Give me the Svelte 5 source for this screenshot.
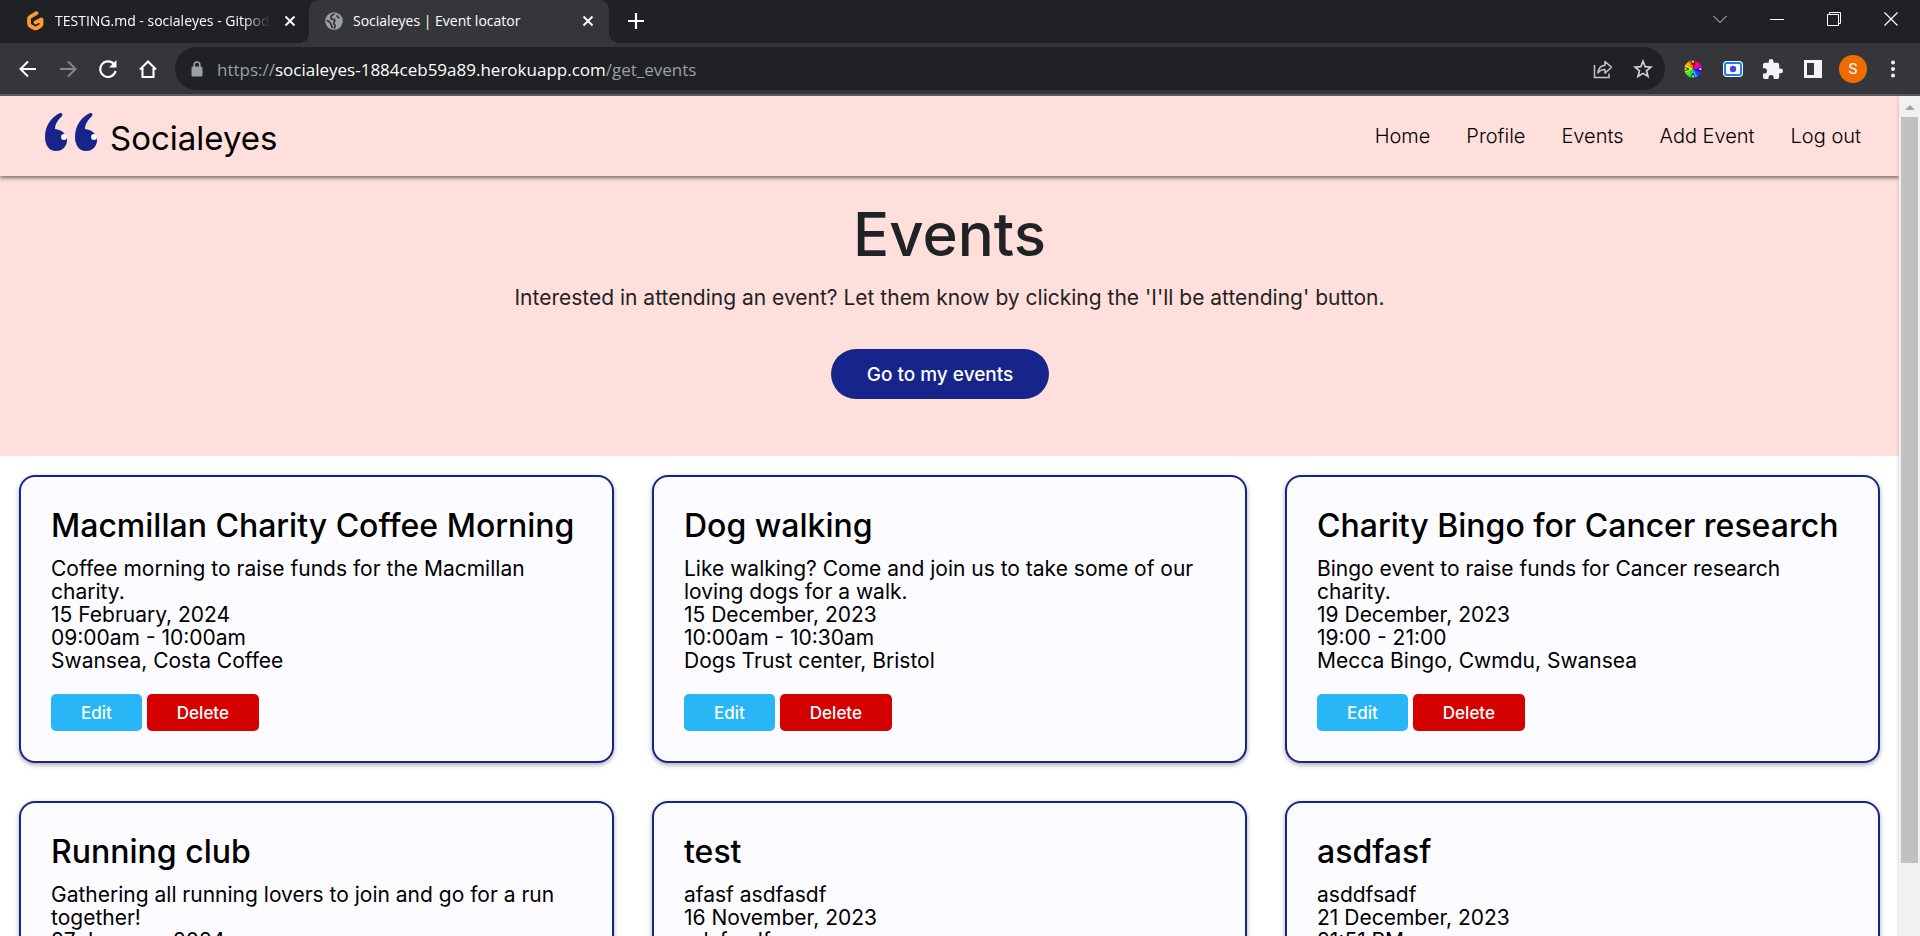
<script>
  const nav = ['Home', 'Profile', 'Events', 'Add Event', 'Log out'];
  const events = [
    { title: 'Macmillan Charity Coffee Morning', about: 'Coffee morning to raise funds for the Macmillan charity.', date: '15 February, 2024', time: '09:00am - 10:00am', place: 'Swansea, Costa Coffee' },
    { title: 'Dog walking', about: 'Like walking? Come and join us to take some of our loving dogs for a walk.', date: '15 December, 2023', time: '10:00am - 10:30am', place: 'Dogs Trust center, Bristol' },
    { title: 'Charity Bingo for Cancer research', about: 'Bingo event to raise funds for Cancer research charity.', date: '19 December, 2023', time: '19:00 - 21:00', place: 'Mecca Bingo, Cwmdu, Swansea' },
    { title: 'Running club', about: 'Gathering all running lovers to join and go for a run together!', date: '27 January, 2024' },
    { title: 'test', about: 'afasf asdfasdf', date: '16 November, 2023', time: 'adsfasdf' },
    { title: 'asdfasf', about: 'asddfsadf', date: '21 December, 2023', time: '21:51 PM' }
  ];
  const wedges = ['#ff0000', '#ff00a0', '#e000ff', '#5000ff', '#0050ff', '#00d0ff', '#00f080', '#30ff00', '#b0ff00', '#ffff00', '#ffb000', '#ff6000'];
</script>

<div class="browser">
  <header class="chrome">
    <div class="tabs">
      <div class="tab">
        <svg class="fav" viewBox="0 0 20 24" width="20" height="24"><path d="M11.500 4.200 5.500 7.600Q4 8.500 4 10V14.500Q4 16.200 5.500 17L9 19Q10.500 19.800 12 19L15 17.300Q16.500 16.500 16.500 15V10.500L10.500 13.500" fill="none" stroke="#ff9a33" stroke-width="3.800" stroke-linecap="round" stroke-linejoin="round" /></svg>
        <span class="name fade">TESTING.md - socialeyes - Gitpod</span>
        <button class="close" aria-label="Close tab"><svg viewBox="0 0 12 12" width="12" height="12"><path d="M1.500 1.500l9 9M10.500 1.500l-9 9" stroke="#fff" stroke-width="1.900" /></svg></button>
      </div>
      <div class="tab active">
        <svg class="fav" viewBox="0 0 18 18" width="18" height="18"><circle cx="9" cy="9" r="8.800" fill="#9aa0a6" /><path d="M9.500 1.800C6.500 3 5.500 5 6 6.500c.800 1.200 3 .300 3.800 1.700.500 1.300-1.300 1.800-1 3.300.300 1 1.400 1 1.200 2.200-.200 1-.600 2-.500 3M1.800 8.500c2 .300 3.200 1.500 3.800 3 .400 1.400 1.500 1.800 1.600 4.500M12.500 3c-.800 1.600.500 2.800 2 2.800" fill="none" stroke="#35363a" stroke-width="1.800" /></svg>
        <span class="name">Socialeyes | Event locator</span>
        <button class="close" aria-label="Close tab"><svg viewBox="0 0 12 12" width="12" height="12"><path d="M1.500 1.500l9 9M10.500 1.500l-9 9" stroke="#fff" stroke-width="1.900" /></svg></button>
      </div>
      <button class="newtab" aria-label="New tab"><svg viewBox="0 0 16 16" width="16" height="16"><path d="M8 0v16M0 8h16" stroke="#fff" stroke-width="2.200" /></svg></button>
      <div class="window">
        <button aria-label="Search tabs"><svg viewBox="0 0 14 14" width="14" height="14"><path d="M.5 4 7 10.500 13.500 4" fill="none" stroke="#ddd" /></svg></button>
        <button aria-label="Minimize"><svg viewBox="0 0 14 14" width="14" height="14"><path d="M0 7.500h14" stroke="#fff" /></svg></button>
        <button aria-label="Restore"><svg viewBox="0 0 14 14" width="14" height="14"><path d="M.5 2.500h11v11H.5zM2.500 2.500v-2h11v11h-2" fill="none" stroke="#fff" /></svg></button>
        <button aria-label="Close window"><svg viewBox="0 0 14 14" width="14" height="14"><path d="M.5.5l13 13M13.500.5l-13 13" stroke="#fff" stroke-width="1.200" /></svg></button>
      </div>
    </div>
    <div class="toolbar">
      <div class="go">
        <button aria-label="Back"><svg viewBox="0 0 20 20" width="20" height="20"><path d="M18 10H3M10 2.500 2.500 10l7.500 7.500" fill="none" stroke="#fff" stroke-width="2" /></svg></button>
        <button aria-label="Forward"><svg viewBox="0 0 20 20" width="20" height="20"><path d="M2 10h15M10 2.500l7.500 7.500-7.500 7.500" fill="none" stroke="#85868a" stroke-width="2" /></svg></button>
        <button aria-label="Reload"><svg viewBox="0 0 20 20" width="20" height="20"><path d="M16.300 5.500A7.800 7.800 0 1 0 17.600 12" fill="none" stroke="#fff" stroke-width="2.100" /><path d="M18.500 1v7.500H11z" fill="#fff" /></svg></button>
        <button aria-label="Home"><svg viewBox="0 0 20 20" width="20" height="20"><path d="M2 10.500 10 2.500l8 8M4.500 9v9h11V9" fill="none" stroke="#fff" stroke-width="2.100" /></svg></button>
      </div>
      <div class="omnibox">
        <svg viewBox="0 0 14 18" width="14" height="18"><rect x="1.500" y="6.500" width="11" height="10" rx="1.500" fill="#9aa0a6" /><path d="M4.200 7V4.800a2.800 2.800 0 0 1 5.600 0V7" fill="none" stroke="#9aa0a6" stroke-width="1.600" /></svg>
        <p class="url">https://<b>socialeyes-1884ceb59a89.herokuapp.com</b>/get_events</p>
        <button aria-label="Share"><svg viewBox="0 0 20 20" width="20" height="20"><path d="M1.500 6v12.500H16v-4" fill="none" stroke="#c4c7cb" stroke-width="1.500" /><path d="M12 2.500v3.800C7.500 6.800 5.300 9.500 5 14c1.800-2.500 3.800-3.400 7-3.400v3.600l6.500-5.900z" fill="none" stroke="#c4c7cb" stroke-width="1.500" stroke-linejoin="round" /></svg></button>
        <button aria-label="Bookmark"><svg viewBox="0 0 20 20" width="20" height="20"><path d="M10 2.200 12.200 7.700 18 8.100 13.500 11.800 15 17.500 10 14.400 5 17.500 6.500 11.800 2 8.100 7.800 7.700z" fill="none" stroke="#d0d2d6" stroke-width="1.700" /></svg></button>
      </div>
      <div class="tools">
        <button aria-label="Colour picker"><svg viewBox="-10 -10 20 20" width="20" height="20">{#each wedges as fill, i}<path d="M0 0 0-8.700A8.700 8.700 0 0 1 4.350-7.530Z" {fill} transform="rotate({i * 30})" />{/each}{#each [0, 90, 180, 270] as turn}<path d="M0-10 1.600-7.500 0-4-1.600-7.500Z" fill="#ccc" stroke="#222" stroke-width="1" transform="rotate({turn})" />{/each}</svg></button>
        <button aria-label="Screen recorder"><svg viewBox="0 0 20 20" width="20" height="20"><rect x="0" y="2" width="20" height="16" rx="4" fill="#fff" /><rect x="2" y="4" width="16" height="12" rx="2" fill="none" stroke="#1a7cff" stroke-width="2" /><circle cx="10" cy="10" r="3.200" fill="#3b4bdc" /></svg></button>
        <button aria-label="Extensions"><svg viewBox="2 1 21 21" width="20" height="20"><path d="M20.500 11H19V7a2 2 0 0 0-2-2h-4V3.500a2.500 2.500 0 0 0-5 0V5H4a2 2 0 0 0-2 2v3.800h1.500a2.700 2.700 0 0 1 0 5.400H2V20a2 2 0 0 0 2 2h3.800v-1.500a2.700 2.700 0 0 1 5.400 0V22H17a2 2 0 0 0 2-2v-4h1.500a2.500 2.500 0 0 0 0-5z" fill="#f1f3f4" /></svg></button>
        <button aria-label="Side panel"><svg viewBox="0 0 20 20" width="20" height="20"><path d="M1 1h18v18H1zM4 4v12h7V4z" fill="#f1f3f4" fill-rule="evenodd" /></svg></button>
        <button class="avatar" aria-label="Account">S</button>
        <button class="more" aria-label="Menu"><svg viewBox="0 0 6 20" width="6" height="20"><g fill="#f1f3f4"><circle cx="3" cy="3.500" r="2" /><circle cx="3" cy="10" r="2" /><circle cx="3" cy="16.500" r="2" /></g></svg></button>
      </div>
    </div>
  </header>

  <div class="view">
    <div class="page">
      <div class="navbar">
        <a class="brand" href="#home">
          <svg viewBox="0 0 52 38" width="52" height="38" aria-hidden="true">
            {#each [0, 30] as x}
              <g transform="translate({x} 0)"><path d="M15 0C6 4 0 13 0 24c0 8 4 14 11 14s11-5 11-11c0-6-5-10-12-11 0-5 3-9 7-13 1-1.500 0-3.500-2-3z" fill="#172489" /><circle cx="19" cy="24" r="2.900" fill="#fff" /></g>
            {/each}
          </svg>
          <span>Socialeyes</span>
        </a>
        <nav>{#each nav as item}<a href="#{item}">{item}</a>{/each}</nav>
      </div>
      <section class="hero">
        <h1>Events</h1>
        <p>Interested in attending an event? Let them know by clicking the 'I'll be attending' button.</p>
        <button class="mine">Go to my events</button>
      </section>
      <main class="cards">
        {#each events as e}
          <article>
            <h2>{e.title}</h2>
            <p>{e.about}</p>
            <p>{e.date}</p>
            {#if e.time}<p>{e.time}</p>{/if}
            {#if e.place}<p>{e.place}</p>{/if}
            <div class="actions"><button class="edit">Edit</button><button class="delete">Delete</button></div>
          </article>
        {/each}
      </main>
    </div>
    <div class="scroll" aria-hidden="true"><i class="arrow"></i><i class="thumb"></i></div>
  </div>
</div>

<style>
  :global(body) { margin: 0; }
  * { box-sizing: border-box; }
  button { border: 0; padding: 0; background: none; font: inherit; color: inherit; }
  svg { display: block; flex: none; }
  h1, h2, p { margin: 0; }
  .browser { height: 100vh; overflow: hidden; display: flex; flex-direction: column; font-family: Inter, sans-serif; color: #000; background: #fff; }
  .chrome { flex: none; font-family: "Open Sans", sans-serif; color: #fff; border-bottom: 2px solid #5b5c60; background: #35363a; }
  .tabs { display: flex; height: 43px; background: #202124; }
  .tab { display: flex; align-items: center; width: 300px; padding: 0 15px 2px 16px; gap: 10px; font-size: 14px; }
  .tab:first-child { width: 309px; padding: 0 13px 2px 25px; }
  .active { position: relative; background: #35363a; border-radius: 10px 10px 0 0; }
  .active::before, .active::after { content: ""; position: absolute; bottom: 0; width: 10px; height: 10px; }
  .active::before { right: 100%; background: radial-gradient(circle at 0 0, transparent 10px, #35363a 10px); }
  .active::after { left: 100%; background: radial-gradient(circle at 100% 0, transparent 10px, #35363a 10px); }
  .name { flex: 1; min-width: 0; overflow: hidden; white-space: nowrap; }
  .fade { -webkit-mask-image: linear-gradient(90deg, #000 86%, transparent 98%); mask-image: linear-gradient(90deg, #000 86%, transparent 98%); }
  .newtab { margin: 0 auto 2px 19px; }
  .window { display: flex; margin: 0 1px 6px 0; }
  .window button { width: 57px; display: grid; place-items: center; }
  .toolbar { display: flex; align-items: center; height: 51px; padding: 0 24px 0 0; }
  .go { display: flex; gap: 20px; padding: 0 17px 0 18px; }
  .omnibox { flex: 1; display: flex; align-items: center; gap: 20px; height: 43px; padding: 0 12px 0 15px; border-radius: 22px; background: #202124; }
  .url { flex: 1; margin-left: -7px; padding-top: 2px; font-size: 17px; line-height: 24px; color: #9aa0a6; }
  .url b { font-weight: 400; color: #fff; }
  .tools { display: flex; align-items: center; gap: 20px; padding-left: 18px; }
  .avatar { width: 28px; height: 28px; margin: 0 3px 0 -4px; border-radius: 50%; background: #ef6c00; font: 15px Roboto, sans-serif; }
  .view { flex: 1; min-height: 0; display: flex; }
  .page { flex: 1; min-width: 0; overflow: hidden; }
  .navbar { position: relative; display: flex; justify-content: space-between; align-items: center; height: 80px; padding: 0 38px 0 45px; background: #ffdfdb; box-shadow: 0 2px 4px #0008; }
  a { color: #000; text-decoration: none; }
  .brand { display: flex; align-items: center; gap: 13px; padding-bottom: 8px; font-size: 33px; }
  .brand span { line-height: 40px; padding-top: 12px; }
  nav { display: flex; gap: 36px; font-size: 20px; line-height: 24px; font-weight: 300; }
  .hero { height: 280px; padding: 22px 19px 0; text-align: center; background: #ffdfdb; color: #1f2326; }
  h1 { font-size: 60px; line-height: 72px; font-weight: 500; }
  .hero p { margin-top: 16px; font-size: 21px; line-height: 24px; }
  .mine { display: inline-block; height: 50px; margin: 39px 19px 0 0; padding: 0 36px; border-radius: 25px; background: #172489; color: #fff; font-size: 19px; font-weight: 500; }
  .cards { display: grid; grid-template-columns: repeat(3, 1fr); gap: 38px; padding: 19px; }
  article { min-height: 288px; padding: 30px; border: 2px solid #172489; border-radius: 16px; background: #fcfbff; box-shadow: 0 2px 5px #0005; }
  h2 { margin-bottom: 12px; font-size: 32px; line-height: 38px; font-weight: 500; }
  article p { font-size: 21px; line-height: 23px; }
  .actions { display: flex; gap: 5px; margin-top: 22px; color: #fff; font-size: 17px; font-weight: 500; }
  .actions button { height: 37px; padding: 0 30px; border-radius: 5px; }
  .edit { background: #29b6f6; }
  .delete { background: #d50000; }
  .scroll { position: relative; width: 21px; display: flex; flex-direction: column; align-items: center; background: #f1f1f1; box-shadow: -1px 0 3px #0002; }
  .arrow { margin: 9px 0 7px; border: 5px solid transparent; border-top: 0; border-bottom-color: #a3a3a3; }
  .thumb { width: 17px; height: 746px; background: #c1c1c1; }
</style>
